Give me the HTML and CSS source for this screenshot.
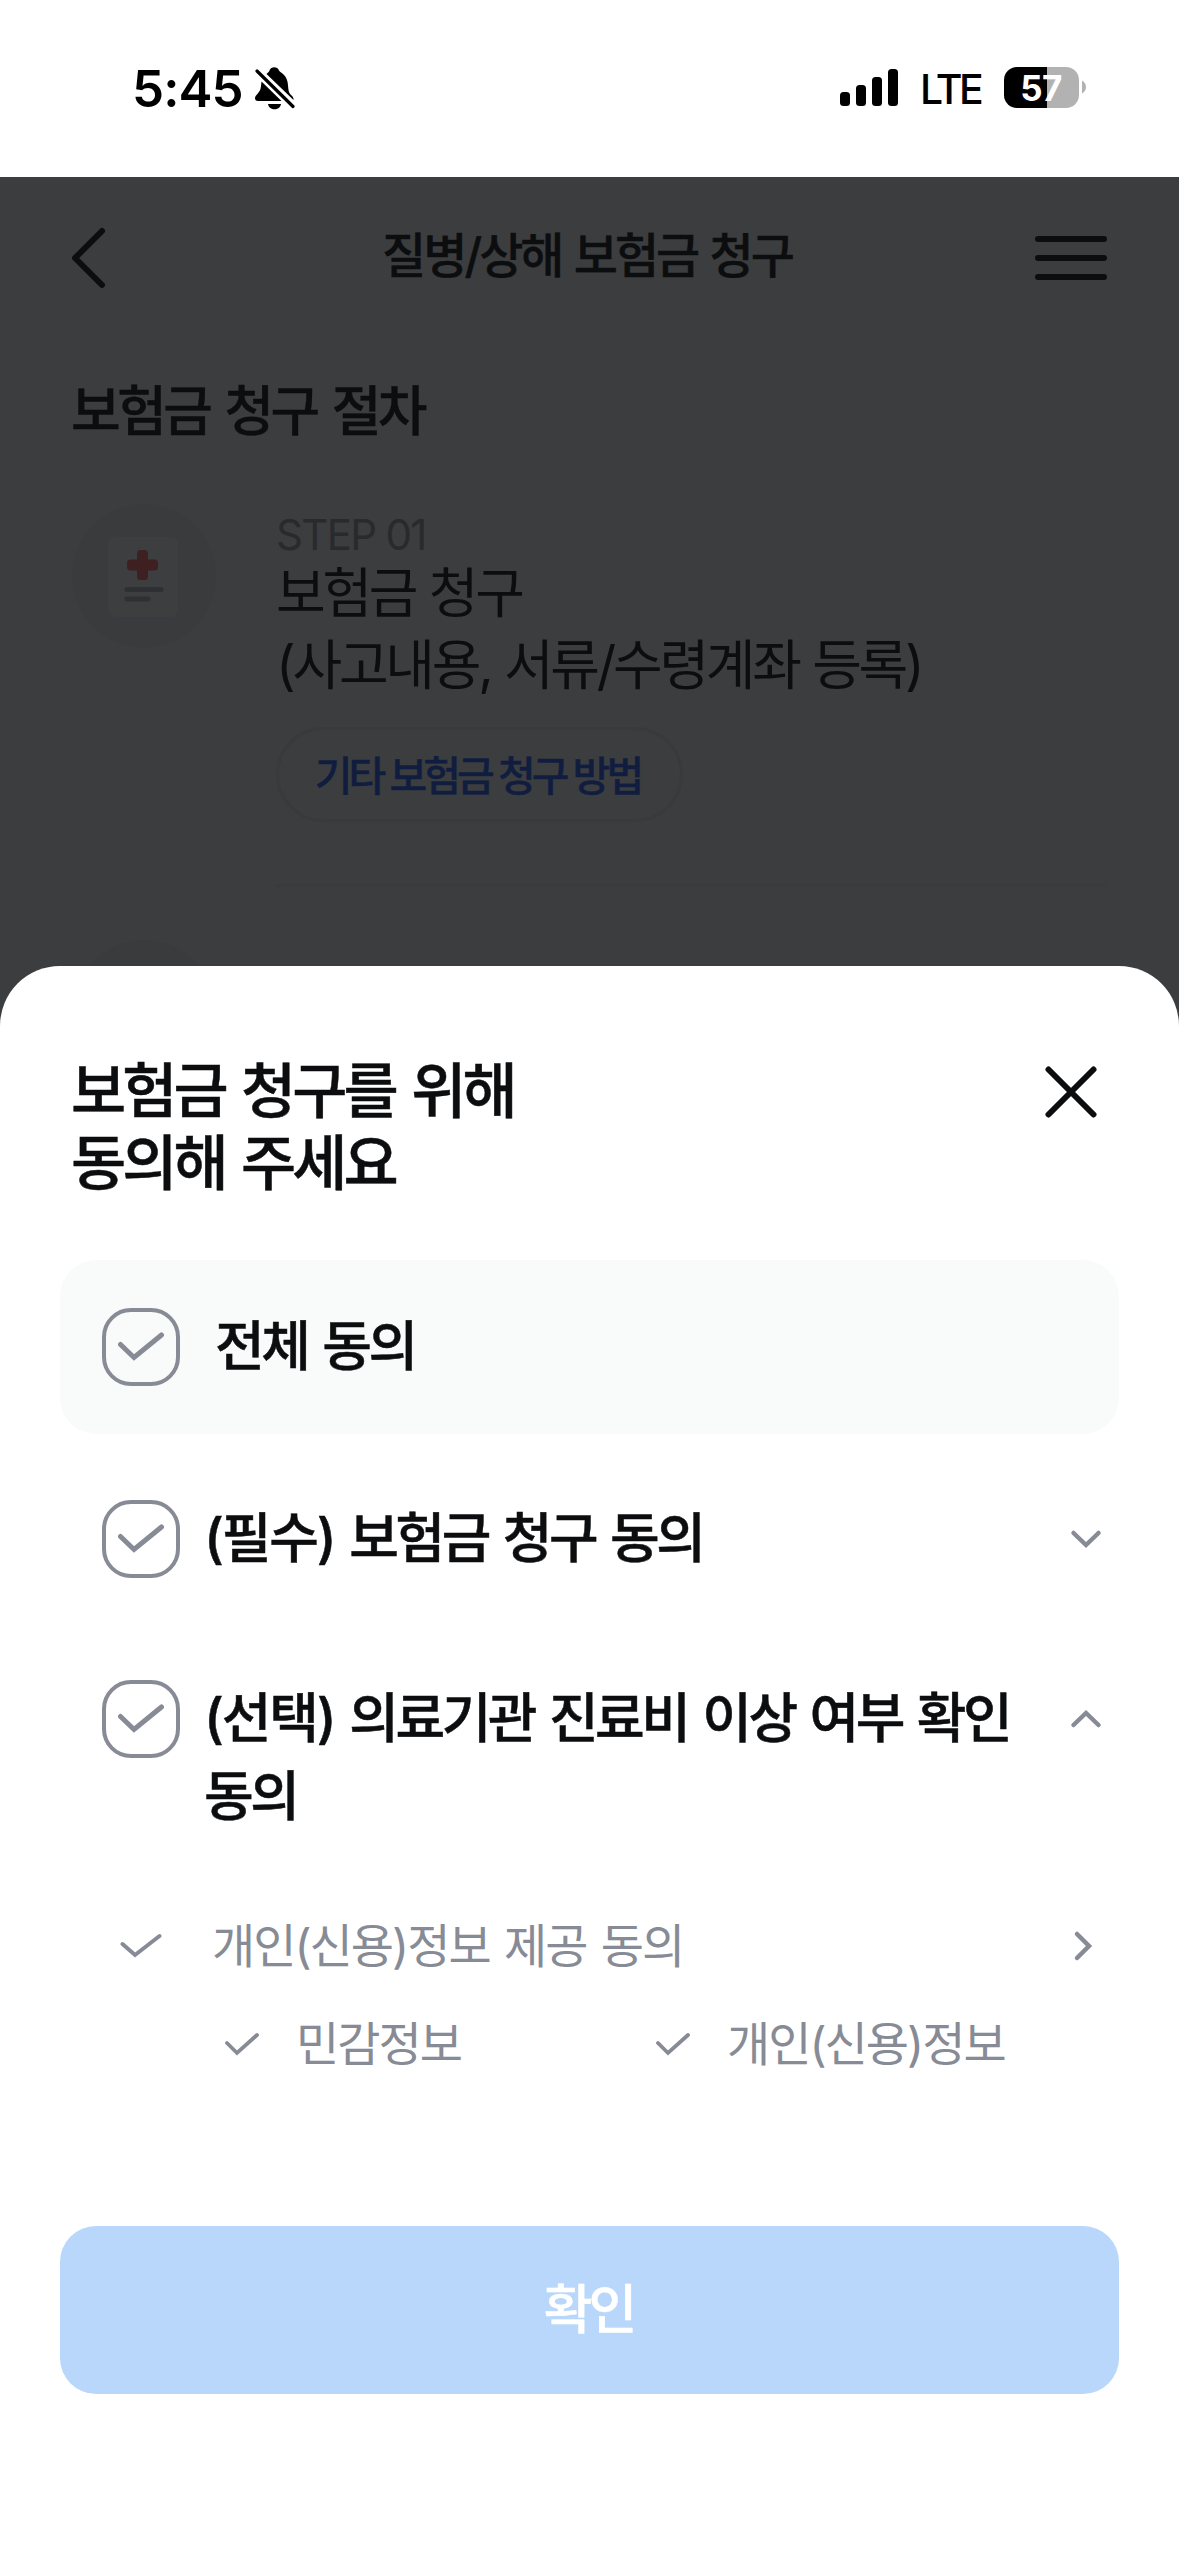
FILE: index.html
```html
<!DOCTYPE html>
<html lang="ko">
<head>
<meta charset="utf-8">
<title>질병/상해 보험금 청구</title>
<link rel="stylesheet" href="styles.css">
</head>
<body>
<svg class="defs" width="0" height="0">
  <symbol id="check" viewBox="0 0 46 30"><path d="M2.500 12.500 L16 25.500 L43.500 3" fill="none" stroke="currentColor" stroke-width="5" stroke-linecap="round"/></symbol>
  <symbol id="tick" viewBox="0 0 42 26"><path d="M2.500 11 L15 22 L39.500 3" fill="none" stroke="currentColor" stroke-width="4" stroke-linecap="round"/></symbol>
</svg>
<div class="screen">
  <header class="status">
    <div class="status-left">
      <span class="time">5:45</span>
      <svg class="bell" width="40" height="44" viewBox="0 0 40 44">
        <path d="M6.500 14.500 L26.500 34 H3 C1 34 0 32.800 0 31 C0 28 5.500 26 6 19 Z"/>
        <path d="M11.500 7 C13 5.500 14 5 14.500 3.500 C16 -.8 22.500 -.8 24 3.500 C24.800 5.300 27 5.500 29.500 8.500 C34 14 32.500 20 34 25 C35 28 38.500 29 38.500 32 V33 Z"/>
        <path d="M13 37 H26 C25 44 14 44 13 37 Z"/>
        <path d="M2 4 L38 39.500" fill="none" stroke="#000" stroke-width="3.200" stroke-linecap="round"/>
      </svg>
    </div>
    <div class="status-right">
      <svg class="signal" width="58" height="38" viewBox="0 0 58 38">
        <rect x="0" y="23" width="10" height="14" rx="3.500"/><rect x="16" y="16" width="10" height="21" rx="3.500"/><rect x="32" y="8" width="10" height="29" rx="3.500"/><rect x="48" y="0" width="10" height="37" rx="3.500"/>
      </svg>
      <span class="net">LTE</span>
      <span class="battery">57</span>
      <svg class="nub" width="4" height="14" viewBox="0 0 4 14"><path d="M0 0.500 C5.300 3 5.300 11 0 13.500 Z" fill="#b2b2b2"/></svg>
    </div>
  </header>

  <main class="page">
    <nav class="topbar">
      <svg width="36" height="62" viewBox="0 0 36 62"><path d="M32 4 L5 31 L32 58" fill="none" stroke="#0c0d0f" stroke-width="6" stroke-linecap="round" stroke-linejoin="round"/></svg>
      <h1 class="topbar-title">질병/상해 보험금 청구</h1>
      <svg width="72" height="44" viewBox="0 0 72 44"><path d="M3 3 H69 M3 22 H69 M3 41 H69" stroke="#0c0d0f" stroke-width="6" stroke-linecap="round"/></svg>
    </nav>
    <h2 class="section-title">보험금 청구 절차</h2>
    <section class="step">
      <div class="step-icon">
        <svg width="82" height="94" viewBox="0 0 82 94">
          <rect x="0" y="2" width="82" height="92" rx="12" fill="#3a3b3e"/>
          <rect x="5" y="8" width="70" height="80" rx="7" fill="#3d3e40"/>
          <g fill="#3f2022"><rect x="34" y="21" width="11" height="30" rx="3.500"/><rect x="24" y="30.500" width="31" height="11" rx="3.500"/></g>
          <path d="M24 60.500 H58 M24 70 H45" stroke="#2f3034" stroke-width="5" stroke-linecap="round"/>
        </svg>
      </div>
      <div class="step-body">
        <p class="step-no">STEP 01</p>
        <p class="step-text">보험금 청구</p>
        <p class="step-text">(사고내용, 서류/수령계좌 등록)</p>
        <span class="pill">기타 보험금 청구 방법</span>
      </div>
    </section>
    <section class="step step-next">
      <div class="step-icon"></div>
      <p class="step-no">STEP 02</p>
    </section>
  </main>

  <section class="sheet">
    <div class="sheet-head">
      <h2 class="sheet-title">보험금 청구를 위해<br>동의해 주세요</h2>
      <svg class="close" width="52" height="52" viewBox="0 0 52 52"><path d="M3.500 3.500 L48.500 48.500 M48.500 3.500 L3.500 48.500" stroke="#0c0d0f" stroke-width="6" stroke-linecap="round"/></svg>
    </div>
    <div class="row all">
      <span class="box"><svg width="46" height="30"><use href="#check"/></svg></span>
      <span class="label label-all">전체 동의</span>
    </div>
    <div class="row required">
      <span class="box"><svg width="46" height="30"><use href="#check"/></svg></span>
      <span class="label"><span class="tag">(필수)</span> 보험금 청구 동의</span>
      <svg class="arrow" width="32" height="20" viewBox="0 0 32 20"><path d="M3.500 4 L16 16 L28.500 4" fill="none" stroke="#878b95" stroke-width="4.500" stroke-linecap="round"/></svg>
    </div>
    <div class="row optional">
      <span class="box"><svg width="46" height="30"><use href="#check"/></svg></span>
      <span class="label"><span class="tag">(선택)</span> 의료기관 진료비 이상 여부 확인<br>동의</span>
      <svg class="arrow" width="32" height="20" viewBox="0 0 32 20"><path d="M3.500 16 L16 4 L28.500 16" fill="none" stroke="#878b95" stroke-width="4.500" stroke-linecap="round"/></svg>
    </div>
    <div class="sub">
      <svg width="42" height="26"><use href="#tick"/></svg>
      <span class="sub-label">개인(신용)정보 제공 동의</span>
      <svg width="20" height="32" viewBox="0 0 20 32"><path d="M4 4 L16 16 L4 28" fill="none" stroke="#878b95" stroke-width="4.500" stroke-linecap="round"/></svg>
    </div>
    <div class="kinds">
      <span class="kind"><svg width="34" height="24" viewBox="0 0 34 24"><path d="M2 11 L12 21 L32 3" fill="none" stroke="#878b95" stroke-width="3.800" stroke-linecap="round"/></svg><span class="sub-label">민감정보</span></span>
      <span class="kind"><svg width="34" height="24" viewBox="0 0 34 24"><path d="M2 11 L12 21 L32 3" fill="none" stroke="#878b95" stroke-width="3.800" stroke-linecap="round"/></svg><span class="sub-label">개인(신용)정보</span></span>
    </div>
    <button class="confirm" type="button">확인</button>
  </section>
</div>
</body>
</html>
```
FILE: styles.css
```css
* { box-sizing: border-box; }
body, h1, h2, p { margin: 0; }
body {
  font-family: Inter, "Noto Sans CJK KR", sans-serif;
  color: #0c0d0f;
  background: #fff;
}
svg { display: block; flex: none; }
.defs { position: absolute; }
.screen {
  position: relative;
  width: 1179px;
  height: 2556px;
  overflow: hidden;
}

/* status bar */
.status {
  display: flex;
  justify-content: space-between;
  height: 177px;
  padding: 67px 93px 0 132px;
  color: #000;
}
.status-left, .status-right { display: flex; align-items: flex-start; }
.time { width: 123px; font-size: 51px; font-weight: 600; line-height: 43px; letter-spacing: -0.900px; }
.signal { margin-top: 2px; }
.net { width: 82px; margin-left: 22px; font-size: 41px; font-weight: 500; line-height: 44px; letter-spacing: -3.500px; }
.battery {
  width: 75px;
  height: 41px;
  margin-left: 2px;
  padding-right: 1px;
  border-radius: 13px;
  background: linear-gradient(90deg, #000 43px, #b2b2b2 43px);
  color: #fff;
  font-size: 35px;
  font-weight: 700;
  line-height: 42px;
  letter-spacing: -0.500px;
  text-align: center;
}
.nub { margin: 13px 0 0 3px; }

/* dimmed page */
.page { height: 849px; background: #3c3d3f; overflow: hidden; }
.topbar {
  display: flex;
  align-items: center;
  justify-content: space-between;
  height: 162px;
  padding: 0 72px 0 70px;
}
.topbar-title {
  margin-left: 33px;
  padding-bottom: 4px;
  font-size: 48px;
  font-weight: 500;
  line-height: 60px;
  letter-spacing: -3px;
  word-spacing: 2.500px;
  white-space: nowrap;
  -webkit-text-stroke: 0.400px;
}
.section-title {
  margin: 39px 0 0 71px;
  font-size: 54px;
  font-weight: 500;
  line-height: 68px;
  letter-spacing: -3.500px;
  word-spacing: 4px;
  -webkit-text-stroke: 0.400px;
}
.step { display: flex; gap: 60px; height: 383px; margin: 58px 72px 0; }
.step-icon {
  display: flex;
  flex: none;
  align-items: center;
  justify-content: center;
  width: 144px;
  height: 144px;
  border-radius: 50%;
  background: #3a3b3d;
}
.step-body { flex: 1; padding-top: 8px; border-bottom: 3px solid #3a3b3d; }
.step-no { color: #292a2d; font-size: 42px; line-height: 46px; letter-spacing: -1.700px; }
.step-text { font-size: 54px; line-height: 72px; letter-spacing: -3.250px; word-spacing: 1.500px; white-space: nowrap; }
.pill {
  display: inline-flex;
  align-items: center;
  justify-content: center;
  width: 407px;
  height: 95px;
  margin-top: 25px;
  padding: 0 4px 4px 0;
  border: 3px solid #393a3c;
  border-radius: 48px;
  color: #101d3f;
  font-size: 41px;
  font-weight: 500;
  letter-spacing: -3.900px;
  white-space: nowrap;
  -webkit-text-stroke: 0.400px;
}
.step-next { margin-top: 53px; }
.step-next .step-no { padding-top: 19px; }

/* consent sheet */
.sheet {
  position: absolute;
  left: 0;
  right: 0;
  bottom: 0;
  height: 1590px;
  padding: 89px 60px 0;
  border-radius: 60px 60px 0 0;
  background: #fff;
}
.sheet-head { display: flex; justify-content: space-between; height: 205px; padding: 0 22px 0 11px; }
.sheet-title {
  font-size: 60px;
  font-weight: 500;
  line-height: 72px;
  letter-spacing: -4px;
  word-spacing: 4.500px;
  -webkit-text-stroke: 0.500px;
}
.close { margin-top: 11px; }
.row { display: flex; align-items: flex-start; padding-left: 42px; }
.box {
  display: flex;
  flex: none;
  align-items: center;
  justify-content: center;
  width: 78px;
  height: 78px;
  border: 4px solid #878b95;
  border-radius: 29px;
  color: #878b95;
}
.label {
  flex: 1;
  margin-left: 24px;
  font-size: 54px;
  font-weight: 500;
  line-height: 78px;
  letter-spacing: -3.500px;
  word-spacing: 4px;
  white-space: nowrap;
  -webkit-text-stroke: 0.500px;
}
.label-all { margin-left: 35px; }
.tag { letter-spacing: -2.200px; }
.all { height: 174px; padding-top: 48px; border-radius: 36px; background: #f9fbfa; }
.required { height: 180px; padding-top: 66px; }
.optional { height: 279px; padding-top: 66px; }
.arrow { margin: 29px 17px 0 0; }
.sub { display: flex; align-items: center; height: 104px; padding: 1px 26px 0 60px; color: #878b95; }
.sub-label { color: #878b95; font-size: 47px; line-height: 60px; letter-spacing: -2px; word-spacing: 3px; white-space: nowrap; }
.sub .sub-label { flex: 1; margin-left: 50px; }
.kinds { display: grid; grid-template-columns: 431px 1fr; align-items: center; height: 94px; padding-left: 165px; }
.kind { display: flex; align-items: center; gap: 37px; }
.confirm {
  display: block;
  width: 1059px;
  height: 168px;
  margin-top: 135px;
  padding: 0 2px 8px 0;
  border: 0;
  border-radius: 36px;
  background: #b8d7fb;
  color: #fff;
  font: inherit;
  font-size: 53px;
  font-weight: 500;
  letter-spacing: -4px;
  -webkit-text-stroke: 0.500px;
}
```
